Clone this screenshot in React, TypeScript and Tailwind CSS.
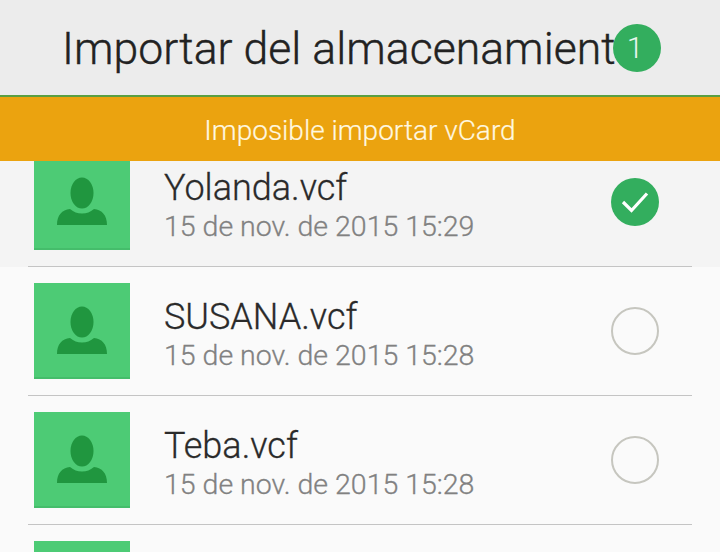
const FONT = "font-['Roboto',sans-serif]";

function Person() {
  return (
    <svg width="50" height="50" viewBox="0 0 50 50" aria-hidden="true">
      <ellipse cx="25" cy="17" rx="11.5" ry="15.5" fill="#20963f" />
      <path d="M0 49 C0 39 5 34 13 33 C17 36 20 37.5 25 37.5 C30 37.5 33 36 37 33 C45 34 50 39 50 49 Z" fill="#20963f" />
    </svg>
  );
}

function Row({ name, date, checked, shaded, divider }: { name: string; date: string; checked?: boolean; shaded?: boolean; divider?: boolean }) {
  return (
    <div className={shaded ? "bg-[#f4f4f4]" : "bg-[#fafafa]"}>
      <div className="h-[128px] pl-[34px] pr-[61px] flex items-center">
        <div className="w-[96px] h-[96px] bg-[#4dcb75] border-b-2 border-[#45bd6b] flex items-center justify-center shrink-0">
          <Person />
        </div>
        <div className="ml-[34px] flex-1 min-w-0 mt-[5px]">
          <div className="text-[36px] leading-[44px] text-[#2a2a2a] font-light [-webkit-text-stroke:0.3px_#2a2a2a]">{name}</div>
          <div className="text-[28.5px] leading-[34px] text-[#818181] font-light [-webkit-text-stroke:0.3px_#818181]">{date}</div>
        </div>
        {checked ? (
          <div className="w-[48px] h-[48px] rounded-full bg-[#33ae5e] flex items-center justify-center shrink-0">
            <svg width="30" height="24" viewBox="0 0 30 24" aria-hidden="true">
              <path d="M3 12 L11.5 20.5 L27 3.5" fill="none" stroke="#ffffff" strokeWidth="3.2" />
            </svg>
          </div>
        ) : (
          <div className="w-[48px] h-[48px] rounded-full border-2 border-[#c6c6bf] shrink-0" />
        )}
      </div>
      {divider && <div className="mx-[28px] h-px bg-[#c4c4c4]" />}
    </div>
  );
}

export default function App() {
  return (
    <div className={`${FONT} w-[720px] h-[552px] overflow-hidden bg-[#fafafa] flex flex-col`}>
      <header className="h-[95px] shrink-0 bg-[#ececec] relative z-10 flex items-center pl-[62px]">
        <h1 className="text-[44.5px] leading-none font-light text-[#222222] whitespace-nowrap [-webkit-text-stroke:0.4px_#222222] mt-[3px] tracking-[0.05px]">
          Importar del almacenamient
        </h1>
        <div className="absolute left-[613px] top-[24px] w-[48px] h-[48px] rounded-full bg-[#33ae5e] flex items-center justify-center text-[30px] font-light text-[#eaf7ee]">
          <span className="-ml-[4px] -mt-[2px]">1</span>
        </div>
      </header>
      <div className="h-[2px] shrink-0 bg-[#5a9f42] relative z-10" />
      <div className="h-[64px] shrink-0 bg-[#eba30f] relative z-10 flex items-center justify-center text-[28px] font-light text-[#fff8e0] [-webkit-text-stroke:0.2px_#fff8e0]">
        <span className="mt-[3px]">Imposible importar vCard</span>
      </div>
      <div className="-mt-[23px]">
        <Row name="Yolanda.vcf" date="15 de nov. de 2015 15:29" checked shaded divider />
        <Row name="SUSANA.vcf" date="15 de nov. de 2015 15:28" divider />
        <Row name="Teba.vcf" date="15 de nov. de 2015 15:28" divider />
        <Row name="" date="" />
      </div>
    </div>
  );
}
